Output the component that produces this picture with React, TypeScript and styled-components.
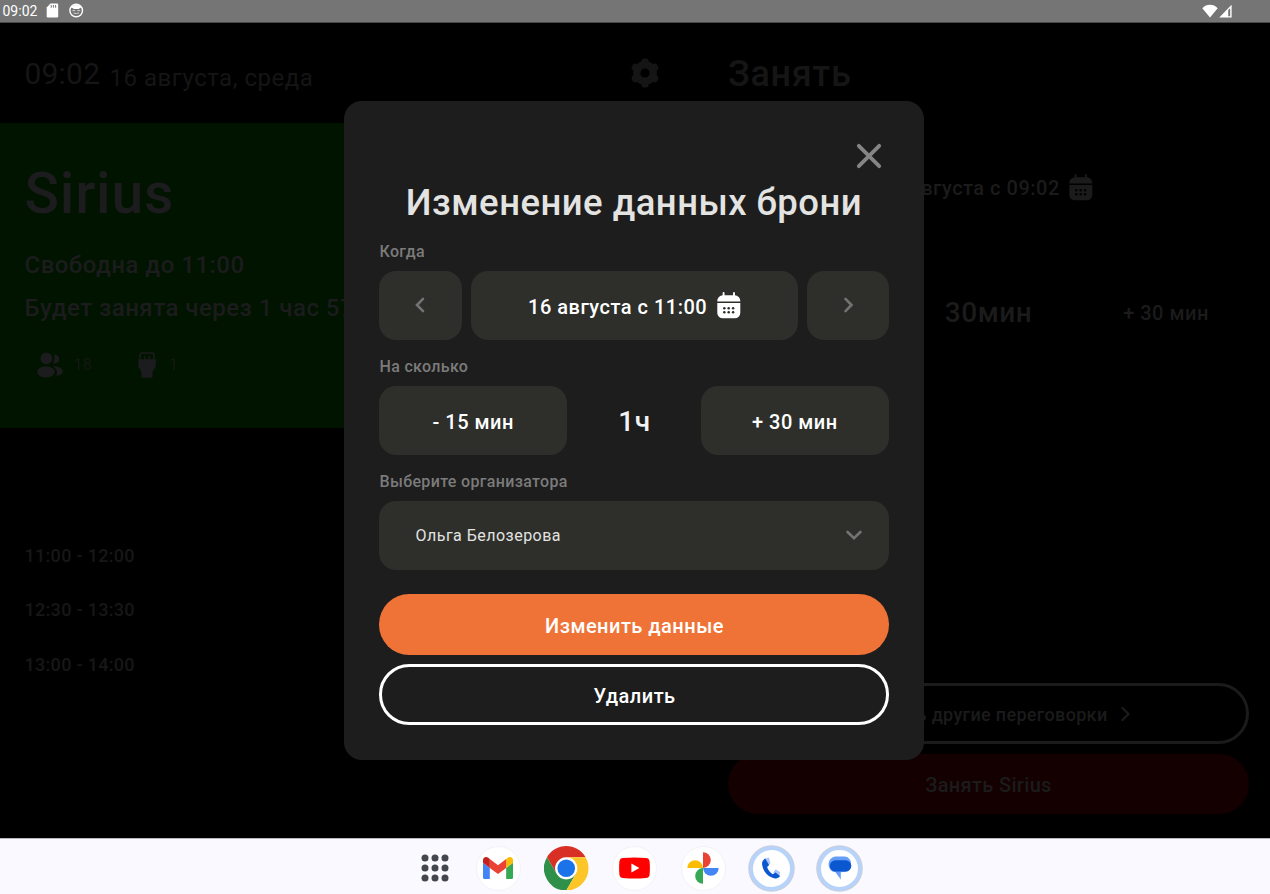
import React from 'react';
import styled, { createGlobalStyle } from 'styled-components';

const dim = '#1b1b1b';

const GlobalStyle = createGlobalStyle`
  * { box-sizing: border-box; }
  body { margin: 0; background: #000; font-family: Roboto, "Liberation Sans", sans-serif; overflow: hidden; }
  button { font-family: inherit; border: 0; padding: 0; background: none; }
  svg { display: block; flex: none; }
`;

const Screen = styled.div`
  position: relative;
  width: 1270px;
  height: 894px;
  display: flex;
  flex-direction: column;
  background: #000;
  overflow: hidden;
`;

const StatusBar = styled.header`
  height: 23px;
  flex: none;
  display: flex;
  align-items: center;
  padding: 0 38px 1px 2.5px;
  background: #757575;
  border-bottom: 1px solid #484848;
  color: #fff;
`;

const StatusClock = styled.span`
  font-size: 14px;
  line-height: 22px;
  padding-top: 0.5px;
  width: 43px;
`;

const StatusIcons = styled.div<{ $gap: number; $end?: boolean }>`
  display: flex;
  align-items: center;
  gap: ${p => p.$gap}px;
  margin-left: ${p => (p.$end ? 'auto' : 0)};
`;

const Main = styled.main`
  flex: 1;
  display: flex;
`;

const Overview = styled.section`
  width: 684px;
  display: flex;
  flex-direction: column;
`;

const OverviewHeader = styled.div`
  height: 100px;
  display: flex;
  align-items: center;
  padding: 0 24px 0 24.5px;
  color: #151515;
`;

const Clock = styled.span`
  font-size: 30px;
  letter-spacing: 0.2px;
  line-height: 36px;
  margin-top: 2px;
  width: 85px;
`;

const Today = styled.span`
  flex: 1;
  font-size: 24px;
  letter-spacing: 0.52px;
  line-height: 30px;
  margin-top: 9px;
`;

const RoomCard = styled.div`
  height: 305px;
  padding: 35px 24px 0 24.5px;
  background: #001400;
  color: #1c1b1d;
`;

const RoomName = styled.h1`
  margin: 0;
  font-size: 57px;
  font-weight: 500;
  letter-spacing: 0.8px;
  line-height: 72px;
`;

const RoomStatus = styled.p`
  margin: 0;
  padding-top: 22px;
  font-size: 24px;
  font-weight: 500;
  letter-spacing: 0.48px;
  line-height: 27.5px;
  white-space: nowrap;
  & + & { padding-top: 15.5px; }
`;

const Facilities = styled.div`
  display: flex;
  align-items: center;
  gap: 46px;
  padding: 28.5px 0 0 12px;
`;

const Facility = styled.div<{ $gap: number }>`
  display: flex;
  align-items: center;
  gap: ${p => p.$gap}px;
  font-size: 16px;
  letter-spacing: 0.3px;
  line-height: 26px;
  color: #1c1b1d;
  span { opacity: 0.7; padding-top: 1px; }
`;

const Schedule = styled.ul`
  list-style: none;
  margin: 0;
  padding: 100.5px 24px 0 24.5px;
`;

const Slot = styled.li`
  font-size: 18px;
  font-weight: 500;
  letter-spacing: 0.3px;
  line-height: 54.5px;
  color: #171717;
`;

const Booking = styled.section`
  flex: 1;
  display: flex;
  flex-direction: column;
  padding: 0 21px 24px 44px;
  color: ${dim};
`;

const BookingTitle = styled.h2`
  margin: 0;
  font-size: 36px;
  font-weight: 500;
  letter-spacing: 0.65px;
  line-height: 103.5px;
  color: #151515;
`;

const BookingWhen = styled.div`
  display: flex;
  justify-content: center;
  align-items: center;
  gap: 9.5px;
  margin-top: 45px;
  padding-right: 3px;
  font-size: 20px;
  font-weight: 500;
  letter-spacing: 0.5px;
  line-height: 30px;
  span { padding-top: 1px; }
`;

const BookingLength = styled.div`
  display: grid;
  grid-template-columns: 1fr 189px 1fr;
  align-items: center;
  text-align: center;
  margin-top: 90px;
  line-height: 40px;
`;

const Amount = styled.span<{ $size?: number }>`
  font-size: ${p => p.$size ?? 20}px;
  font-weight: 500;
  letter-spacing: 0.5px;
`;

const BookingActions = styled.div`
  margin-top: auto;
  display: flex;
  flex-direction: column;
  gap: 10px;
`;

const DimButton = styled.button<{ $filled?: boolean }>`
  display: flex;
  align-items: center;
  justify-content: center;
  gap: 9px;
  height: 60.3px;
  padding: ${p => (p.$filled ? '3px 0 0' : '1px 3px 0 0')};
  border-radius: 30.5px;
  border: ${p => (p.$filled ? '0' : `3.3px solid ${dim}`)};
  background: ${p => (p.$filled ? '#140000' : 'transparent')};
  color: ${dim};
  font-size: ${p => (p.$filled ? 20 : 18)}px;
  font-weight: 500;
  letter-spacing: 0.33px;
`;

const Overlay = styled.div`
  position: absolute;
  inset: 23px 0 56px;
  display: flex;
  justify-content: center;
  align-items: flex-start;
  padding: 77.7px 2px 0 0;
`;

const Dialog = styled.div`
  width: 580px;
  height: 659px;
  padding: 35.3px 35px 0;
  border-radius: 18px;
  background: #1d1d1d;
  display: flex;
  flex-direction: column;
`;

const CloseButton = styled.button`
  align-self: flex-end;
  width: 40px;
  height: 40px;
  display: grid;
  place-items: center;
`;

const DialogTitle = styled.h2`
  margin: 0;
  text-align: center;
  font-size: 36.5px;
  font-weight: 500;
  letter-spacing: 0.47px;
  line-height: 53px;
  color: #e3e3e1;
  white-space: nowrap;
`;

const Label = styled.label<{ $first?: boolean }>`
  margin-top: ${p => (p.$first ? 10 : 14.4)}px;
  padding: 0 0 7px 0.5px;
  font-size: 16px;
  font-weight: 500;
  letter-spacing: 0.33px;
  line-height: 25px;
  color: #7b7b7b;
`;

const DateRow = styled.div`
  display: grid;
  grid-template-columns: 82.5px 326.4px 81.7px;
  gap: 9.7px;
`;

const LengthRow = styled.div`
  display: grid;
  grid-template-columns: 188.4px 1fr 188.4px;
  align-items: center;
  text-align: center;
  color: #fff;
`;

const Tile = styled.button`
  display: flex;
  align-items: center;
  justify-content: center;
  gap: 9.5px;
  height: 68.6px;
  border-radius: 17px;
  background: #2e2f2b;
  color: #fff;
  font-size: 20px;
  font-weight: 500;
  letter-spacing: 0.5px;
  span { padding-top: 3px; }
`;

const Length = styled.span`
  font-size: 28px;
  font-weight: 500;
  letter-spacing: 0.5px;
  padding: 3px 0 0 1px;
  color: #f2f2f2;
`;

const Select = styled(Tile)`
  justify-content: space-between;
  padding: 0 27px 0 36.5px;
  font-size: 16px;
  font-weight: 400;
  letter-spacing: 0.48px;
  color: #e3e3e1;
  span { padding-top: 0; }
`;

const Action = styled.button<{ $outlined?: boolean }>`
  height: 60.6px;
  flex: none;
  margin-top: ${p => (p.$outlined ? 9.4 : 24.7)}px;
  padding: 3px 0 0 1px;
  border-radius: 30.3px;
  border: ${p => (p.$outlined ? '3.3px solid #fff' : '0')};
  background: ${p => (p.$outlined ? 'transparent' : '#ef7337')};
  color: #fff;
  font-size: 20px;
  font-weight: 500;
  letter-spacing: 0.48px;
`;

const Dock = styled.footer`
  height: 56px;
  flex: none;
  display: flex;
  align-items: center;
  padding: 3px 0 0 406px;
  background: #faf9ff;
  border-top: 1px solid #b9b8be;
`;

const DockItem = styled.div<{ $width?: number }>`
  width: ${p => p.$width ?? 68.3}px;
  display: flex;
  justify-content: center;
`;

const Disc = styled.div<{ $ring?: boolean }>`
  width: 45px;
  height: 45px;
  border-radius: 50%;
  display: grid;
  place-items: center;
  background: #fff;
  border: ${p => (p.$ring ? '4.6px solid #b7d3fa' : '1px solid #f3f2f6')};
  box-shadow: ${p => (p.$ring ? '0 0 0 0.8px #cccdd2' : 'none')};
`;

const Chevron = ({ dir, color = '#737373', w = 2.6 }: { dir: 'left' | 'right' | 'down'; color?: string; w?: number }) => {
  const d = { left: 'M11 1.9L5 8l6 6.1', right: 'M5.500 1.900L11.500 8l-6 6.100', down: 'M1.600 5l6.400 6.200L14.400 5' }[dir];
  return (
    <svg width="16" height="16" viewBox="0 0 16 16" fill="none" stroke={color} strokeWidth={w} strokeLinecap="round">
      <path d={d} />
    </svg>
  );
};

const CalendarIcon = ({ color, back }: { color: string; back: string }) => (
  <svg width="24" height="27" viewBox="0 0 24 27">
    <rect x="0.3" y="3.300" width="23" height="23" rx="5.500" fill={color} />
    <path d="M6.600 1v4M17 1v4" stroke={color} strokeWidth="1.900" strokeLinecap="round" />
    <rect x="0" y="9.500" width="24" height="1.500" fill={back} />
    {[16.3, 20.3].map(y => [7.3, 11.7, 16.1].map(x => <circle key={`${x},${y}`} cx={x} cy={y} r="1.250" fill={back} />))}
  </svg>
);

const GearIcon = () => (
  <svg width="30" height="30" viewBox="-15 -15 30 30">
    <g fill="#151515">
      <circle r="11.900" />
      {[0, 60, 120].map(a => <rect key={a} x="-3.600" y="-14.600" width="7.200" height="29.200" rx="3.200" transform={`rotate(${a})`} />)}
    </g>
    <circle r="4.600" fill="#000" />
  </svg>
);

const PeopleIcon = () => (
  <svg width="27" height="26" viewBox="0 0 27 26" fill="currentColor">
    <circle cx="9.400" cy="6.300" r="5.900" />
    <ellipse cx="8.900" cy="19.900" rx="8.700" ry="5.700" />
    <path d="M17 2.700c3.200-.3 5.300 1.600 5.300 4.400s-2.400 4.900-6.400 4.300c1.700-2.900 2.100-5.700 1.100-8.700z" />
    <path d="M15.800 14.200c5.600-.2 10 2 10 5 0 2.600-2.500 4.200-6.300 4.500 1.400-4-.2-7.200-3.700-9.500z" />
  </svg>
);

const HdmiIcon = () => (
  <svg width="18" height="26" viewBox="0 0 18 26" fill="currentColor">
    <path d="M2 8V3Q2 1 4 1h10q2 0 2 2v5" fill="none" stroke="currentColor" strokeWidth="1.500" />
    <path d="M6.700 4v4M11.300 4v4" stroke="currentColor" strokeWidth="1.200" />
    <path d="M1 7.200h16q.8 0 .8.800v6q0 .6-.3 1L14.500 20v5q0 .8-.8.800H4.300q-.8 0-.8-.8v-5L.5 15q-.3-.5-.3-1V8q0-.8.800-.8z" />
  </svg>
);

export default function App() {
  return (
    <Screen>
      <GlobalStyle />
      <StatusBar>
        <StatusClock>09:02</StatusClock>
        <StatusIcons $gap={10}>
          <svg width="13" height="15" viewBox="0 0 13 15">
            <path d="M4.500.5H11q1.200 0 1.200 1.200v11.600q0 1.200-1.200 1.200H1.900Q.7 14.500.7 13.300V4.600z" fill="#fff" />
            <path d="M5.200 2v2.700M7.400 2v2.700M9.600 2v2.700" stroke="#757575" strokeWidth="1" />
          </svg>
          <svg width="15" height="15" viewBox="0 0 15 15">
            <circle cx="7.200" cy="7.500" r="6.300" fill="none" stroke="#fff" strokeWidth="1.400" />
            <path d="M1.500 5.500A6.500 6.500 0 0 1 13 5.500L11.800 4.800 9.500 5.900H5L2.700 4.800z" fill="#fff" />
            <path d="M3.400 7.600h2.800M8.300 7.600h2.800M4.500 9.900q2.700 1.300 5.400 0" stroke="#ddd" strokeWidth=".9" fill="none" />
          </svg>
        </StatusIcons>
        <StatusIcons $gap={1} $end>
          <svg width="16" height="14" viewBox="0 0 16 14"><path d="M8 13.500L.3 4.200Q3.500.8 8 .8t7.700 3.400z" fill="#fff" /></svg>
          <svg width="13" height="14" viewBox="0 0 13 14">
            <path d="M.3 13.600L12.600.8v12.800z" fill="#fff" />
            <path d="M9.200 6v6.300h2V4.200z" fill="#757575" />
          </svg>
        </StatusIcons>
      </StatusBar>

      <Main>
        <Overview>
          <OverviewHeader>
            <Clock>09:02</Clock>
            <Today>16 августа, среда</Today>
            <GearIcon />
          </OverviewHeader>
          <RoomCard>
            <RoomName>Sirius</RoomName>
            <RoomStatus>Свободна до 11:00</RoomStatus>
            <RoomStatus>Будет занята через 1 час 57 минут</RoomStatus>
            <Facilities>
              <Facility $gap={10}><PeopleIcon /><span>18</span></Facility>
              <Facility $gap={13}><HdmiIcon /><span>1</span></Facility>
            </Facilities>
          </RoomCard>
          <Schedule>
            <Slot>11:00 - 12:00</Slot>
            <Slot>12:30 - 13:30</Slot>
            <Slot>13:00 - 14:00</Slot>
          </Schedule>
        </Overview>

        <Booking>
          <BookingTitle>Занять</BookingTitle>
          <BookingWhen>
            <span>16 августа с 09:02</span>
            <CalendarIcon color={dim} back="#000" />
          </BookingWhen>
          <BookingLength>
            <Amount>- 15 мин</Amount>
            <Amount $size={28}>30мин</Amount>
            <Amount>+ 30 мин</Amount>
          </BookingLength>
          <BookingActions>
            <DimButton>
              Смотреть другие переговорки
              <Chevron dir="right" color={dim} w={2.2} />
            </DimButton>
            <DimButton $filled>Занять Sirius</DimButton>
          </BookingActions>
        </Booking>
      </Main>

      <Dock>
        <DockItem $width={58}>
          <svg width="28" height="28" viewBox="-14 -14 28 28" fill="#44464d">
            {[-10, 0, 10].map(y => [-10, 0, 10].map(x => <circle key={`${x},${y}`} cx={x} cy={y} r="3.500" />))}
          </svg>
        </DockItem>
        <DockItem>
          <Disc>
            <svg width="30" height="22.500" viewBox="52 42 88 66">
              <path fill="#4285f4" d="M58 108h14V74L52 59v43c0 3.320 2.690 6 6 6" />
              <path fill="#34a853" d="M120 108h14c3.320 0 6-2.690 6-6V59l-20 15" />
              <path fill="#fbbc04" d="M120 48v26l20-15v-8c0-7.420-8.470-11.650-14.400-7.200" />
              <path fill="#ea4335" d="M72 74V48l24 18 24-18v26L96 92" />
              <path fill="#c5221f" d="M52 51v8l20 15V48l-5.600-4.200c-5.940-4.450-14.400-.22-14.400 7.200" />
            </svg>
          </Disc>
        </DockItem>
        <DockItem>
          <svg width="44.500" height="44.500" viewBox="0 0 48 48">
            <circle cx="24" cy="24" r="12" fill="#fff" />
            <path fill="#d93025" d="M24 12H44.780A24 24 0 0 0 3.215 12L13.600 30A12 12 0 0 1 24 12z" />
            <path fill="#2f9149" d="M13.600 30L3.215 12A24 24 0 0 0 24 48L34.390 30A12 12 0 0 1 13.600 30z" />
            <path fill="#fcc629" d="M24 12H44.780A24 24 0 0 1 24 48L34.390 30A12 12 0 0 0 24 12z" />
            <circle cx="24" cy="24" r="9.500" fill="#1a73e8" />
          </svg>
        </DockItem>
        <DockItem>
          <Disc>
            <svg width="31" height="22" viewBox="0 0 31 22">
              <path d="M4 .9Q15.500-.1 27 .9q3.300.3 3.600 3.700.6 6.400 0 12.800-.3 3.400-3.600 3.700-11.500 1-23 0Q.7 20.800.4 17.400q-.6-6.400 0-12.800Q.7 1.200 4 .9z" fill="#f00" />
              <path d="M12.400 6.600l8 4.400-8 4.400z" fill="#fff" />
            </svg>
          </Disc>
        </DockItem>
        <DockItem>
          <Disc>
            <svg width="32" height="32" viewBox="-16 -16 32 32">
              <path fill="#ea4335" d="M0-.1V-15.700A7.800 7.800 0 0 1 0-.1z" />
              <path fill="#fbbc04" d="M-.1 0H-15.700A7.800 7.800 0 0 1-.1 0z" />
              <path fill="#4285f4" d="M.1 0H15.700A7.800 7.800 0 0 1 .1 0z" />
              <path fill="#34a853" d="M0 .1V15.700A7.800 7.800 0 0 1 0 .1z" />
            </svg>
          </Disc>
        </DockItem>
        <DockItem>
          <Disc $ring>
            <svg width="20" height="22" viewBox="0 0 20 22">
              <path d="M3.500 1.800L8 .5l1.500 6-3.300 2.800zM12.200 15.500l2.500-3.200 4.500 3-.9 3.500z" fill="#a8c7fa" />
              <path d="M4.200 1.400C2 2.700.8 5 1.100 7.600 1.900 14.400 7.400 20.700 14 21.500c2.200.2 4-.6 5.100-2.400l-4.600-3.500-2.800 1.600C9 15.600 6.900 12.900 6.100 10.100l2-2.200z" fill="#0b57d0" />
            </svg>
          </Disc>
        </DockItem>
        <DockItem>
          <Disc $ring>
            <svg width="24" height="24" viewBox="0 0 24 24">
              <path d="M7 .6h9.500a6.500 6.500 0 0 1 6.500 7c0 5-3 8.500-7 8.500l-3.200.2v7.200l-5.500-7.400A7.300 7.300 0 0 1 .6 8.500 7.500 7.500 0 0 1 7 .6z" fill="#669df6" />
              <rect x="1.800" y="4.300" width="21.500" height="11.300" rx="5.700" fill="#0b57d0" />
            </svg>
          </Disc>
        </DockItem>
      </Dock>

      <Overlay>
        <Dialog role="dialog">
          <CloseButton aria-label="Закрыть">
            <svg width="26" height="26" viewBox="0 0 26 26" stroke="#858585" strokeWidth="3.800" strokeLinecap="round">
              <path d="M2.800 2.800l20.400 20.400M23.200 2.800L2.800 23.200" />
            </svg>
          </CloseButton>
          <DialogTitle>Изменение данных брони</DialogTitle>
          <Label $first>Когда</Label>
          <DateRow>
            <Tile><Chevron dir="left" /></Tile>
            <Tile><span>16 августа с 11:00</span><CalendarIcon color="#fff" back="#2e2f2b" /></Tile>
            <Tile><Chevron dir="right" /></Tile>
          </DateRow>
          <Label>На сколько</Label>
          <LengthRow>
            <Tile><span>- 15 мин</span></Tile>
            <Length>1ч</Length>
            <Tile><span>+ 30 мин</span></Tile>
          </LengthRow>
          <Label>Выберите организатора</Label>
          <Select><span>Ольга Белозерова</span><Chevron dir="down" /></Select>
          <Action>Изменить данные</Action>
          <Action $outlined>Удалить</Action>
        </Dialog>
      </Overlay>
    </Screen>
  );
}
